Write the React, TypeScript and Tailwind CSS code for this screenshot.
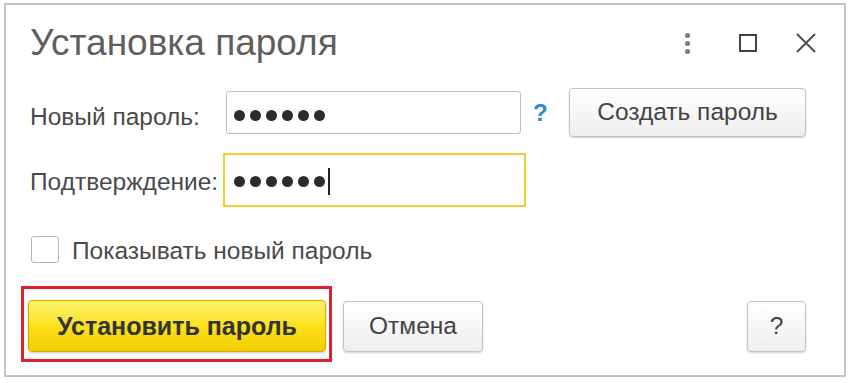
const dots = [0, 1, 2, 3, 4, 5]

function PasswordDots() {
  return (
    <div className="flex items-center gap-[5px]">
      {dots.map((d) => (
        <span key={d} className="h-[11px] w-[11px] rounded-full bg-[#2c2c2c]" />
      ))}
    </div>
  )
}

function GrayButton({ label, className }: { label: string; className: string }) {
  return (
    <button
      className={`flex items-center justify-center rounded-[4px] border border-[#c2c2c2] bg-gradient-to-b from-white to-[#eeeeee] text-[24.5px] leading-none text-[#444] shadow-[0_1px_2px_rgba(0,0,0,0.18)] ${className}`}
    >
      {label}
    </button>
  )
}

export default function App() {
  return (
    <div className="h-[383px] w-[853px] bg-white pl-[4px] pt-[3px] font-['Liberation_Sans',Arial,sans-serif]">
      <div className="flex h-[374px] w-[842px] flex-col border-2 border-[#c4c4c4] pl-[24px] pr-[38px]">
        {/* header */}
        <div className="mt-[20px] flex h-[36px] items-center">
          <h1 className="text-[37px] leading-[36px] text-[#5e5e5e]">Установка пароля</h1>
          <div className="-mr-[10px] ml-auto flex items-center">
            <div className="flex flex-col gap-[3px]">
              <span className="h-[5px] w-[5px] rounded-full bg-[#7a7a7a]" />
              <span className="h-[5px] w-[5px] rounded-full bg-[#7a7a7a]" />
              <span className="h-[5px] w-[5px] rounded-full bg-[#7a7a7a]" />
            </div>
            <span className="ml-[49px] h-[18px] w-[18px] border-2 border-[#444]" />
            <svg className="ml-[39px]" width="20" height="20" viewBox="0 0 20 20">
              <path d="M1 1 L19 19 M19 1 L1 19" stroke="#4a4a4a" strokeWidth="1.8" />
            </svg>
          </div>
        </div>

        {/* new password */}
        <div className="mt-[27px] flex h-[49px] items-center">
          <span className="mt-[8px] w-[196px] text-[24.5px] leading-[28px] text-[#4a4a4a]">Новый пароль:</span>
          <div className="flex h-[43px] w-[295px] items-center rounded-[3px] border border-[#bdbdbd] pl-[7px] pt-[6px]">
            <PasswordDots />
          </div>
          <span className="ml-[12px] text-[24px] font-bold text-[#2f8ac9]">?</span>
          <GrayButton label="Создать пароль" className="ml-auto h-[49px] w-[237px]" />
        </div>

        {/* confirmation */}
        <div className="mt-[16px] flex h-[54px] items-center">
          <span className="mt-[3px] w-[193px] text-[24.5px] leading-[28px] text-[#4a4a4a]">Подтверждение:</span>
          <div className="flex h-[54px] w-[303px] items-center border-2 border-[#f2cd35] pl-[9px] pt-[3px]">
            <PasswordDots />
            <span className="ml-[3px] h-[27px] w-[2px] bg-[#222]" />
          </div>
        </div>

        {/* show password */}
        <div className="mt-[29px] flex h-[27px] items-center">
          <span className="ml-[1px] h-[27px] w-[28px] rounded-[3px] border border-[#b5b5b5] bg-white" />
          <span className="ml-[13px] mt-[2px] text-[24.5px] leading-[28px] text-[#4a4a4a]">Показывать новый пароль</span>
        </div>

        {/* actions */}
        <div className="mt-[37px] flex h-[52px] items-center">
          <div className="relative -ml-[2px]">
            <button className="flex h-[52px] w-[298px] items-center justify-center rounded-[4px] border border-[#cfae00] bg-gradient-to-b from-[#fff266] via-[#fbe11a] to-[#f2cc00] text-[25px] font-bold leading-none text-[#333] shadow-[0_1px_2px_rgba(0,0,0,0.2)]">
              Установить пароль
            </button>
            <div className="pointer-events-none absolute -bottom-[10px] -left-[7px] -right-[6px] -top-[14px] border-[3px] border-[#e2222b]" />
          </div>
          <GrayButton label="Отмена" className="ml-[17px] h-[51px] w-[140px]" />
          <GrayButton label="?" className="ml-auto h-[51px] w-[59px]" />
        </div>
      </div>
    </div>
  )
}
